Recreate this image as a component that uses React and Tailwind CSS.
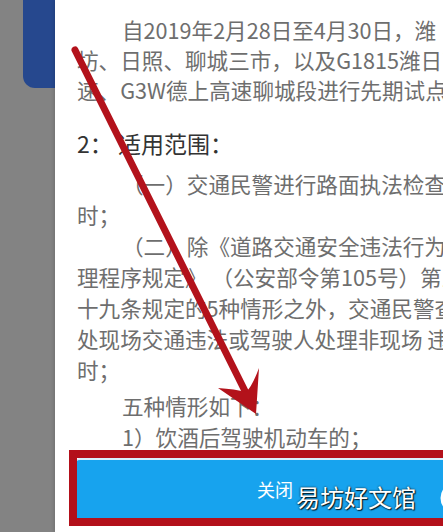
import React from "react";

const Line = ({ indent, className = "", children }) => (
  <div className={`whitespace-nowrap ${indent ? "pl-[45px]" : ""} ${className}`}>{children}</div>
);

export default function App() {
  return (
    <div className="relative flex h-[532px] w-[443px] overflow-hidden bg-white font-['Noto_Sans_CJK_SC','Noto_Sans',sans-serif]">
      {/* dimmed background with blue card edge */}
      <div className="w-[55px] shrink-0 bg-[#838383] pl-[23px]">
        <div className="h-[88px] rounded-bl-[12px] bg-[#26488e]" />
      </div>

      {/* dialog */}
      <div className="flex min-w-0 flex-1 flex-col overflow-hidden bg-white shadow-[-1px_0_3px_rgba(0,0,0,0.15)]">
        <div className="h-[458px] shrink-0 overflow-hidden pl-[22px] pt-[15px] text-[21.6px] text-[#6e6e6e]">
          <div className="leading-[30px]">
            <Line indent>自2019年2月28日至4月30日，潍</Line>
            <Line>坊、日照、聊城三市，以及G1815潍日高速</Line>
            <Line>速、G3W德上高速聊城段进行先期试点工作</Line>
          </div>
          <div className="mt-[23px] whitespace-nowrap text-[23px] leading-[30px] text-[#333333]">
            2： 适用范围：
          </div>
          <div className="mt-[10px] leading-[31px]">
            <Line indent>（一）交通民警进行路面执法检查</Line>
            <Line>时；</Line>
            <Line indent>（二）除《道路交通安全违法行为处</Line>
            <Line>理程序规定》 （公安部令第105号）第三</Line>
            <Line>十九条规定的5种情形之外，交通民警查</Line>
            <Line>处现场交通违法或驾驶人处理非现场 违法</Line>
            <Line>时；</Line>
            <Line indent className="mt-[5px]">五种情形如下：</Line>
            <Line indent>1）饮酒后驾驶机动车的；</Line>
          </div>
        </div>
        <div className="ml-[22px] flex h-[60px] shrink-0 items-center rounded-tl-[3px] border-t-2 border-[#d8f0fd] bg-[#17a3ee] pl-[180px] text-[18px] text-white">
          关闭
        </div>
      </div>

      {/* annotation overlay */}
      <svg className="pointer-events-none absolute left-0 top-0" width="443" height="532" viewBox="0 0 443 532">
        <line x1="75" y1="50" x2="247" y2="395" stroke="#b3121b" strokeWidth="7" strokeLinecap="round" />
        <path d="M256 414 L259 368 Q252 387 246 392 Q235 389 218 388 Z" fill="#b3121b" />
        <rect x="73" y="454" width="400" height="68" fill="none" stroke="#b3101a" strokeWidth="8" />
        <circle cx="456" cy="498" r="14" fill="none" stroke="#ffffff" strokeWidth="3" />
      </svg>

      {/* watermark */}
      <span className="pointer-events-none absolute left-[296px] top-[481px] whitespace-nowrap text-[24px] leading-[32px] text-white [text-shadow:0_0_2px_rgba(0,0,0,0.9),1px_1px_1px_rgba(0,0,0,0.8)]">
        易坊好文馆
      </span>
    </div>
  );
}
